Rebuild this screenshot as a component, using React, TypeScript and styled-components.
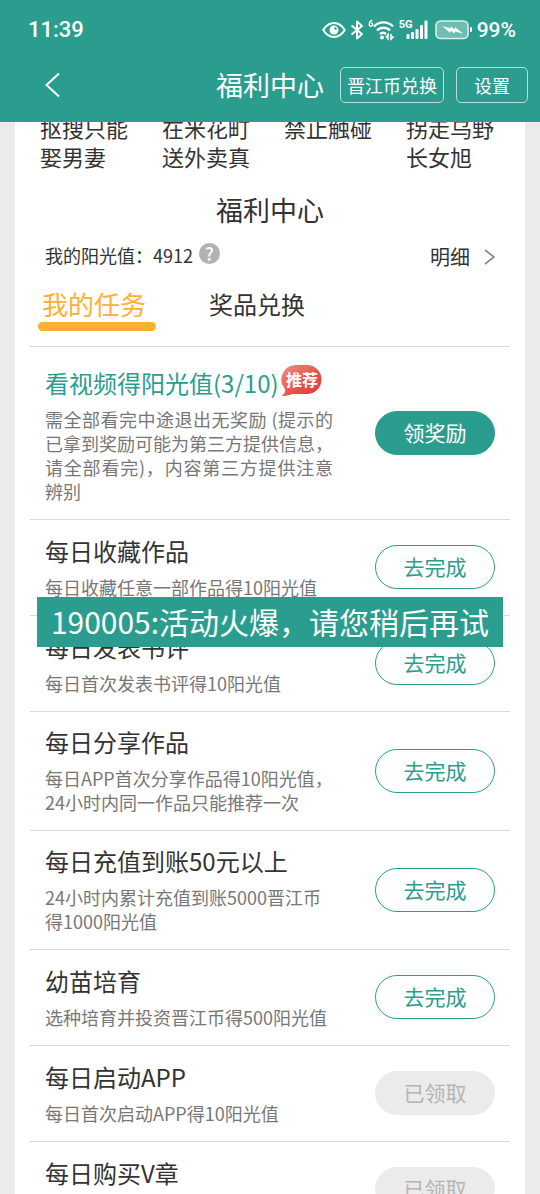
import React from 'react';
import styled, { createGlobalStyle, css } from 'styled-components';

const teal = '#2a9d8f';
const amber = '#ffb032';

const Global = createGlobalStyle`
  * { box-sizing: border-box; }
  body {
    margin: 0;
    background: #ebebeb;
    color: #333;
    font-family: "Noto Sans CJK SC", "Noto Sans", sans-serif;
  }
  button { font-family: inherit; cursor: pointer; margin: 0; }
  h1, h2, h3, p, ul { margin: 0; padding: 0; font-weight: 400; }
`;

const Shell = styled.div`
  height: 100vh;
  display: flex;
  flex-direction: column;
`;

const Header = styled.header`
  flex: none;
  background: ${teal};
  color: #fff;
`;

const StatusBar = styled.div`
  display: flex;
  align-items: center;
  justify-content: space-between;
  height: 60px;
  padding: 0 24px 0 28px;
  font-family: Roboto, sans-serif;
  font-weight: 500;
  line-height: 24px;
`;

const Clock = styled.time`
  font-size: 22px;
`;

const StatusIcons = styled.div`
  display: flex;
  align-items: center;
  gap: 4px;
  svg { display: block; }
`;

const Percent = styled.span`
  font-size: 21px;
`;

const NavBar = styled.nav`
  display: grid;
  grid-template-columns: 1fr auto 1fr;
  align-items: center;
  height: 62px;
  padding: 0 12px 12px;
`;

const BackButton = styled.button`
  justify-self: start;
  border: 0;
  background: none;
  padding: 0 32px;
  color: #fff;
  svg { display: block; }
`;

const NavTitle = styled.h1`
  font-size: 27px;
  line-height: 40px;
`;

const NavActions = styled.div`
  display: flex;
  justify-content: flex-end;
  gap: 12px;
`;

const NavButton = styled.button<{ $wide?: boolean }>`
  height: 36px;
  padding: 0 ${p => (p.$wide ? 17 : 6)}px;
  border: 1px solid #b8ded9;
  border-radius: 5px;
  background: none;
  color: #fff;
  font-size: 18px;
  line-height: 24px;
  white-space: nowrap;
`;

const Scroller = styled.div`
  flex: 1;
  min-height: 0;
  overflow-y: auto;
  scrollbar-width: none;
`;

const Panel = styled.main`
  margin: -9px 15px 0;
  background: #fff;
`;

const Books = styled.ul`
  display: grid;
  grid-template-columns: repeat(4, 1fr);
  padding: 0 11px;
  list-style: none;
`;

const Book = styled.li`
  padding: 0 14px;
  font-size: 22px;
  line-height: 29px;
`;

const SectionTitle = styled.h2`
  margin-top: 19px;
  font-size: 27px;
  line-height: 40px;
  text-align: center;
`;

const Summary = styled.div`
  display: flex;
  align-items: center;
  justify-content: space-between;
  height: 30px;
  margin: 10px 30px 0;
`;

const Balance = styled.div`
  display: flex;
  align-items: center;
  gap: 6px;
  font-size: 18px;
  line-height: 24px;
`;

const HelpButton = styled.button`
  width: 21px;
  height: 21px;
  margin-bottom: 4px;
  padding: 0;
  border: 0;
  border-radius: 50%;
  background: #b2b2b2;
  color: #fff;
  font-size: 18px;
  font-weight: 500;
  line-height: 21px;
`;

const DetailLink = styled.a`
  display: flex;
  align-items: center;
  gap: 14px;
  padding-top: 3px;
  color: #333;
  font-size: 20px;
  line-height: 24px;
  text-decoration: none;
`;

const Tabs = styled.div`
  display: flex;
  gap: 49px;
  margin: 16px 23px 15px;
`;

const Tab = styled.button<{ $active?: boolean }>`
  min-width: 118px;
  padding: 0 4px;
  border: 0;
  background: none;
  color: ${p => (p.$active ? amber : '#333')};
  font-size: ${p => (p.$active ? 26 : 24)}px;
  line-height: 36px;
  text-align: left;
  &::after {
    content: '';
    display: block;
    height: 9px;
    margin: 0 -4px;
    border-radius: 5px;
    background: ${p => (p.$active ? amber : 'transparent')};
  }
`;

const TaskList = styled.ul`
  margin: 0 15px;
  list-style: none;
`;

const Task = styled.li`
  display: flex;
  align-items: center;
  justify-content: space-between;
  min-height: 96px;
  padding: 12px 15px 16px;
  border-top: 1px solid #d9d9d9;
`;

const TaskText = styled.div`
  flex: 1;
  max-width: 288px;
`;

const TaskTitle = styled.h3<{ $featured?: boolean }>`
  display: flex;
  align-items: flex-start;
  gap: 2px;
  font-size: 24px;
  line-height: 36px;
  white-space: nowrap;
  ${p => p.$featured && css`
    padding-top: 6px;
    color: ${teal};
  `}
`;

const TaskNote = styled.p<{ $justify?: boolean }>`
  margin-top: 6px;
  color: #777;
  font-size: 18px;
  line-height: 24px;
  text-align: ${p => (p.$justify ? 'justify' : 'left')};
`;

const Bubble = styled.span`
  display: grid;
  width: 41px;
  height: 32px;
  color: #fff;
  font-size: 16px;
  font-weight: 700;
  line-height: 28px;
  text-align: center;
  > * { grid-area: 1 / 1; }
  > span { padding-left: 2px; }
`;

const pillStyles = {
  claim: css`background: ${teal}; border-color: ${teal}; color: #fff;`,
  go: css`background: #fff; border-color: ${teal}; color: ${teal};`,
  done: css`background: #ebebeb; border-color: #ebebeb; color: #b5b5b5;`,
};

const Pill = styled.button<{ $kind: keyof typeof pillStyles }>`
  flex: none;
  width: 120px;
  height: 44px;
  margin-top: 3px;
  padding: 0 0 2px;
  border: 1px solid;
  border-radius: 22px;
  font-size: 21px;
  line-height: 28px;
  ${p => pillStyles[p.$kind]}
`;

const Toast = styled.div`
  position: fixed;
  top: 50%;
  left: 37px;
  right: 37px;
  padding: 2px 0 4px;
  background: ${teal};
  color: #fff;
  font-size: 30px;
  line-height: 44px;
  text-align: center;
  white-space: nowrap;
`;

const EyeIcon = () => (
  <svg width="24" height="18" viewBox="0 0 24 18" fill="none" stroke="#fff" strokeWidth="2">
    <path d="M1.200 9C4 4.500 7.600 2 12 2s8 2.500 10.800 7C20 13.500 16.400 16 12 16S4 13.500 1.200 9z" />
    <circle cx="12" cy="9" r="4.500" fill="#fff" stroke="none" />
    <circle cx="13.500" cy="7.500" r="1.200" fill={teal} stroke="none" />
  </svg>
);

const BluetoothIcon = () => (
  <svg width="14" height="20" viewBox="0 0 14 20" fill="none" stroke="#fff" strokeWidth="2" strokeLinejoin="round">
    <path d="M1.500 5.500L12 14l-5 4.500v-17L12 6 1.500 14.500" />
  </svg>
);

const WifiIcon = () => (
  <svg width="27" height="22" viewBox="0 0 27 22" fill="none" stroke="#fff">
    <path d="M4.300 1.200C2 2.300 1.200 3.800 1.200 5.600a1.700 1.700 0 1 0 1.700-1.700" strokeWidth="1.400" />
    <path d="M6 7.500C11 2 20 2 25 7.500M9 11.500c3.500-3.600 9.500-3.600 13 0M12 15c1.800-1.600 4.200-1.600 6 0" strokeWidth="2.400" />
    <circle cx="14" cy="18.500" r="1.900" fill="#fff" stroke="none" />
    <path d="M20 20.800v-5l-2.200 2.600M23 15v5l2.600-2.600" strokeWidth="1.600" />
  </svg>
);

const SignalBox = styled.span`
  position: relative;
  margin-right: 2px;
`;

const SignalText = styled.span`
  position: absolute;
  top: -1px;
  left: 0;
  font-size: 11px;
  font-weight: 700;
  line-height: 12px;
`;

const SignalIcon = () => (
  <SignalBox>
    <SignalText>5G</SignalText>
    <svg width="30" height="20" viewBox="0 0 30 20" fill="#fff">
      <rect x="7.500" y="14" width="3" height="5" rx="1" />
      <rect x="12" y="12" width="3" height="7" rx="1" />
      <rect x="16.500" y="9" width="3" height="10" rx="1" />
      <rect x="21" y="5" width="3" height="14" rx="1" />
      <rect x="25.500" y="0.500" width="3" height="18.500" rx="1" />
    </svg>
  </SignalBox>
);

const BatteryIcon = () => (
  <svg width="38" height="20" viewBox="0 0 38 20">
    <rect x="1" y="1" width="32" height="17.500" rx="4.500" fill="#6fbdb3" stroke="#d8f0ec" strokeWidth="1.600" />
    <rect x="35" y="7" width="2" height="5" rx="1" fill="#fff" />
    <path d="M7 6l8.500 2.300L16 6.500l3.500 2.700.8-1.900L28 13.500l-8-2-.8 2-3.200-2.700-1 1.900z" fill="#fff" />
  </svg>
);

const tasks: { title: string; note: string; kind: keyof typeof pillStyles; featured?: boolean }[] = [
  {
    title: '看视频得阳光值(3/10)',
    note: '需全部看完中途退出无奖励 (提示的已拿到奖励可能为第三方提供信息，请全部看完)，内容第三方提供注意辨别',
    kind: 'claim',
    featured: true,
  },
  { title: '每日收藏作品', note: '每日收藏任意一部作品得10阳光值', kind: 'go' },
  { title: '每日发表书评', note: '每日首次发表书评得10阳光值', kind: 'go' },
  { title: '每日分享作品', note: '每日APP首次分享作品得10阳光值，24小时内同一作品只能推荐一次', kind: 'go' },
  { title: '每日充值到账50元以上', note: '24小时内累计充值到账5000晋江币得1000阳光值', kind: 'go' },
  { title: '幼苗培育', note: '选种培育并投资晋江币得500阳光值', kind: 'go' },
  { title: '每日启动APP', note: '每日首次启动APP得10阳光值', kind: 'done' },
  { title: '每日购买V章', note: '每日购买V章得10阳光值', kind: 'done' },
];

const labels = { claim: '领奖励', go: '去完成', done: '已领取' };
const books = ['抠搜只能娶男妻', '在米花町送外卖真', '禁止触碰', '拐走乌野长女旭'];

const RecommendBadge = () => (
  <Bubble>
    <svg width="41" height="32" viewBox="0 0 41 32">
      <defs>
        <linearGradient id="bubble" x1="0" y1="0" x2="1" y2="1">
          <stop offset="0" stopColor="#f0907c" />
          <stop offset="0.600" stopColor="#e5504a" />
          <stop offset="1" stopColor="#df3434" />
        </linearGradient>
      </defs>
      <path
        d="M15.500 0H26a14.500 14.500 0 0 1 0 29H13c-3 0-5.500 2-12.500 2C3.500 29 4.500 27 4 24A14.500 14.500 0 0 1 15.500 0z"
        fill="url(#bubble)"
      />
    </svg>
    <span>推荐</span>
  </Bubble>
);

export default function App() {
  return (
    <Shell>
      <Global />
      <Header>
        <StatusBar>
          <Clock>11:39</Clock>
          <StatusIcons>
            <EyeIcon />
            <BluetoothIcon />
            <WifiIcon />
            <SignalIcon />
            <BatteryIcon />
            <Percent>99%</Percent>
          </StatusIcons>
        </StatusBar>
        <NavBar>
          <BackButton aria-label="返回">
            <svg width="17" height="26" viewBox="0 0 17 26" fill="none" stroke="currentColor" strokeWidth="2">
              <path d="M15 1.500L2.500 13 15 24.500" />
            </svg>
          </BackButton>
          <NavTitle>福利中心</NavTitle>
          <NavActions>
            <NavButton>晋江币兑换</NavButton>
            <NavButton $wide>设置</NavButton>
          </NavActions>
        </NavBar>
      </Header>
      <Scroller>
        <Panel>
          <Books>
            {books.map(name => (
              <Book key={name}>{name}</Book>
            ))}
          </Books>
          <SectionTitle>福利中心</SectionTitle>
          <Summary>
            <Balance>
              我的阳光值：4912
              <HelpButton>?</HelpButton>
            </Balance>
            <DetailLink href="#detail">
              明细
              <svg width="11" height="16" viewBox="0 0 11 16" fill="none" stroke="#888" strokeWidth="1.600">
                <path d="M1 1l9 7-9 7" />
              </svg>
            </DetailLink>
          </Summary>
          <Tabs role="tablist">
            <Tab role="tab" aria-selected $active>我的任务</Tab>
            <Tab role="tab" aria-selected={false}>奖品兑换</Tab>
          </Tabs>
          <TaskList>
            {tasks.map(task => (
              <Task key={task.title}>
                <TaskText>
                  <TaskTitle $featured={task.featured}>
                    {task.title}
                    {task.featured && <RecommendBadge />}
                  </TaskTitle>
                  <TaskNote $justify={task.featured}>{task.note}</TaskNote>
                </TaskText>
                <Pill $kind={task.kind} disabled={task.kind === 'done'}>{labels[task.kind]}</Pill>
              </Task>
            ))}
          </TaskList>
        </Panel>
      </Scroller>
      <Toast role="status">190005:活动火爆，请您稍后再试</Toast>
    </Shell>
  );
}
